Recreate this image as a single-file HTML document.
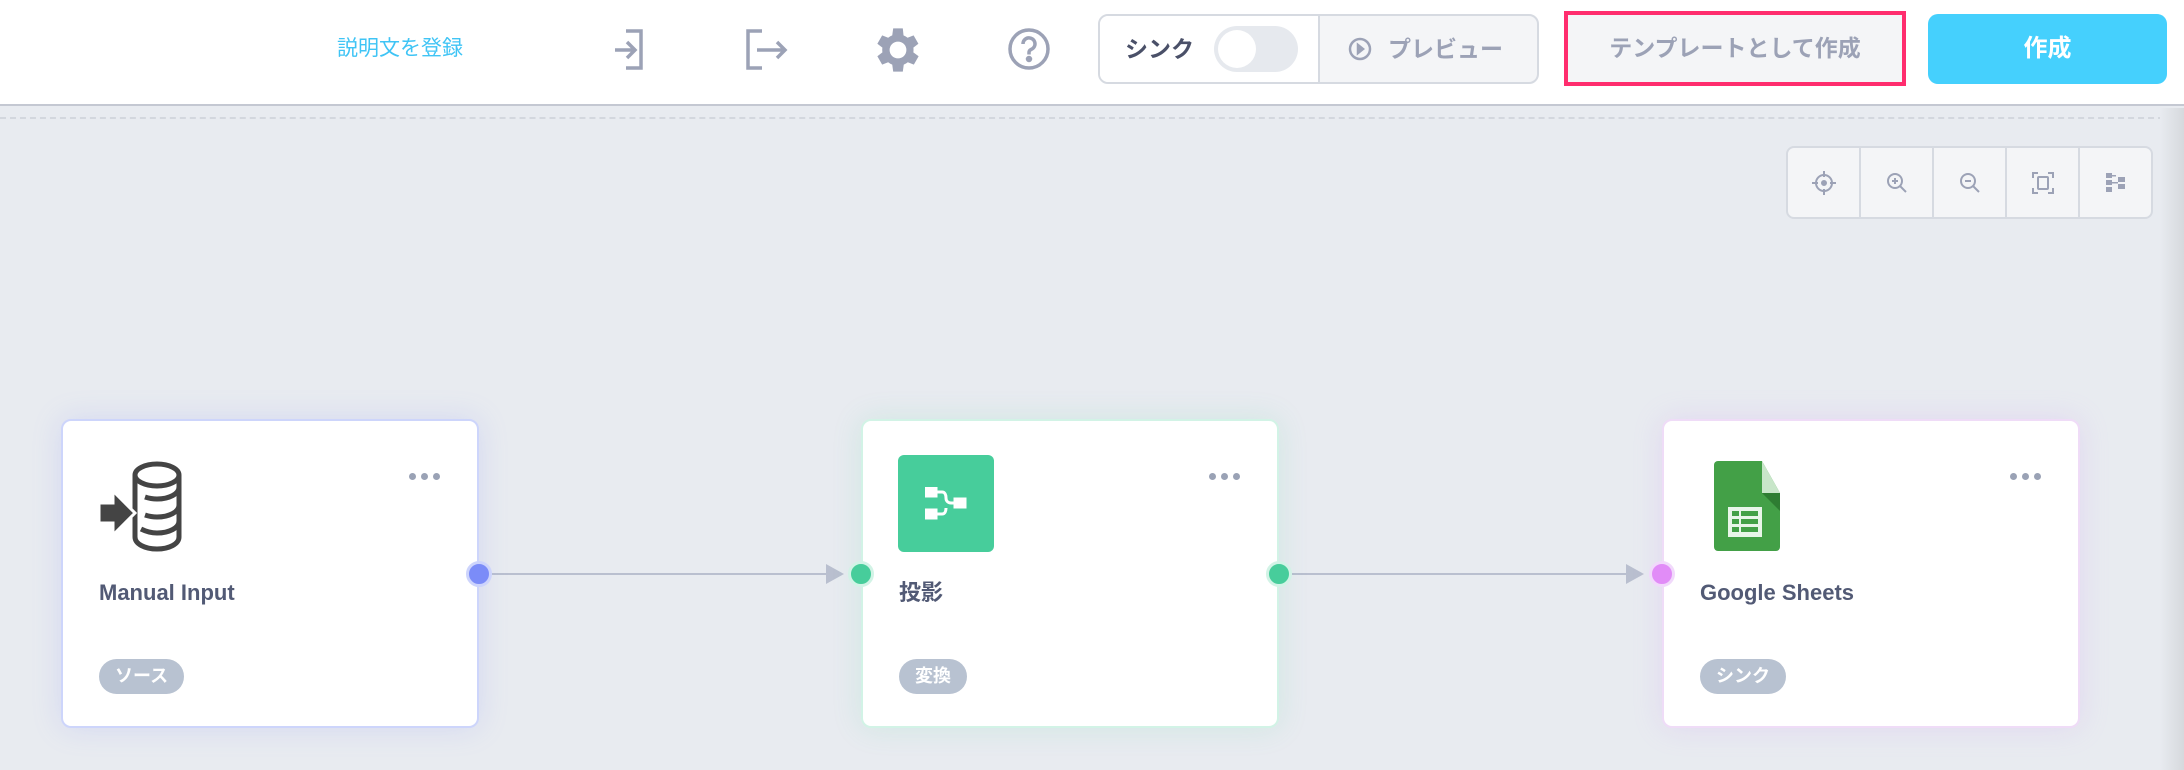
<!DOCTYPE html>
<html><head><meta charset="utf-8"><style>
*{box-sizing:border-box;margin:0;padding:0}
body{width:2184px;height:770px;overflow:hidden;background:#e8ebf0;font-family:"Liberation Sans","Noto Sans CJK JP",sans-serif;position:relative}
.hdr{position:absolute;left:0;top:0;width:2184px;height:106px;background:#fff;border-bottom:2px solid #c4c8d2}
.dash{position:absolute;left:0;top:117px;width:2184px;border-top:2px dashed #d3d7de}
.abs{position:absolute}
.node{position:absolute;top:419px;width:418px;height:309px;background:#fff;border-radius:10px}
.title{position:absolute;left:36px;top:158px;font-size:22px;line-height:28px;font-weight:bold;color:#525a75}
.badge{position:absolute;left:36px;top:238px;height:35px;padding:0 16px;border-radius:18px;background:#b8c2d1;color:#fff;font-size:18px;font-weight:bold;line-height:35px}
.dots{position:absolute;left:346px;top:46px;width:44px;height:10px;white-space:nowrap}
.dots i{display:inline-block;width:7px;height:7px;border-radius:50%;background:#9aa2b5;margin-right:5px}
.port{position:absolute;width:26px;height:26px;border-radius:50%;top:561px}
.line{position:absolute;top:573px;height:2px;background:#b9bfcf}
.arr{position:absolute;top:564px;width:0;height:0;border-top:10px solid transparent;border-bottom:10px solid transparent;border-left:18px solid #b9bfcf}
.tb{position:absolute;left:1786px;top:146px;width:367px;height:73px;background:#f4f5f7;border:2px solid #d6dae1;border-radius:8px;display:flex}
.tb div{flex:1;border-right:2px solid #d6dae1;display:flex;align-items:center;justify-content:center}
.tb div:last-child{border-right:none}
</style></head><body>
<div class="hdr"></div>
<div class="abs" style="left:337px;top:35px;font-size:21px;line-height:28px;color:#3fc4f5">説明文を登録</div>
<svg class="abs" style="left:613px;top:28px" width="44" height="44" viewBox="0 0 44 44" fill="none" stroke="#9ca2b6" stroke-width="3.5"><path d="M13 3h15v37H13"/><path d="M2 22h19M14 14l8 8-8 8"/></svg>
<svg class="abs" style="left:745px;top:28px" width="44" height="44" viewBox="0 0 44 44" fill="none" stroke="#9ca2b6" stroke-width="3.5"><path d="M17 3H3v37h14"/><path d="M12 22h28M32 14l8 8-8 8"/></svg>
<svg class="abs" style="left:874px;top:26px" width="48" height="48" viewBox="2 2 20 20"><path fill="#9ca2b6" fill-rule="evenodd" d="M19.4 13a7.5 7.5 0 000-2l2.1-1.6-2-3.5-2.5 1a7.6 7.6 0 00-1.7-1L15 3h-4l-.4 2.9a7.6 7.6 0 00-1.7 1l-2.5-1-2 3.5L6.5 11a7.5 7.5 0 000 2l-2.1 1.6 2 3.5 2.5-1a7.6 7.6 0 001.7 1L11 21h4l.4-2.9a7.6 7.6 0 001.7-1l2.5 1 2-3.5zM13 15.5a3.5 3.5 0 110-7 3.5 3.5 0 010 7z" transform="translate(-1 0)"/></svg>
<svg class="abs" style="left:1007px;top:27px" width="44" height="44" viewBox="0 0 44 44" fill="none" stroke="#9ca2b6" stroke-width="3.5"><circle cx="22" cy="22" r="19"/><path d="M16 17a6 6 0 1 1 8 5.5c-1.5.7-2 1.7-2 3v2"/><circle cx="22" cy="32" r="1.5" fill="#9ca2b6"/></svg>
<div class="abs" style="left:1098px;top:14px;width:441px;height:70px;border:2px solid #d6dae1;border-radius:10px;background:#f4f5f7;overflow:hidden">
 <div class="abs" style="left:0;top:0;width:220px;height:66px;background:#fff;border-right:2px solid #d6dae1"></div>
 <div class="abs" style="left:25px;top:18px;font-size:23px;line-height:30px;font-weight:bold;color:#4a5068">シンク</div>
 <div class="abs" style="left:114px;top:10px;width:84px;height:46px;border-radius:23px;background:#e6e9ee"></div>
 <div class="abs" style="left:118px;top:14px;width:38px;height:38px;border-radius:50%;background:#fff"></div>
 <svg class="abs" style="left:248px;top:21px" width="24" height="24" viewBox="0 0 24 24" fill="none" stroke="#9ca2b6" stroke-width="2.5"><circle cx="12" cy="12" r="10"/><path d="M10 8l5 4-5 4z" fill="#9ca2b6"/></svg>
 <div class="abs" style="left:288px;top:18px;font-size:23px;line-height:30px;font-weight:bold;color:#9ca2b6">プレビュー</div>
</div>
<div class="abs" style="left:1564px;top:11px;width:342px;height:75px;border:4px solid #ff2d6e;background:#f4f5f7;font-size:23px;font-weight:bold;color:#9ca2b6;text-align:center;line-height:67px">テンプレートとして作成</div>
<div class="abs" style="left:1928px;top:14px;width:239px;height:70px;border-radius:10px;background:#45d0fd;color:#fff;font-size:24px;font-weight:bold;text-align:center;line-height:70px">作成</div>
<div class="dash"></div>
<div class="abs" style="left:2160px;top:108px;width:24px;height:662px;background:linear-gradient(90deg,#e8ebf0,#d6d9dd)"></div>
<div class="tb">
 <div><svg width="26" height="26" viewBox="0 0 26 26" fill="none" stroke="#9ca2b6" stroke-width="2"><circle cx="13" cy="13" r="8"/><circle cx="13" cy="13" r="2" fill="#9ca2b6"/><path d="M13 1v6M13 19v6M1 13h6M19 13h6"/></svg></div>
 <div><svg width="26" height="26" viewBox="0 0 26 26" fill="none" stroke="#9ca2b6" stroke-width="2"><circle cx="11" cy="11" r="7"/><path d="M16 16l6 6M8 11h6M11 8v6"/></svg></div>
 <div><svg width="26" height="26" viewBox="0 0 26 26" fill="none" stroke="#9ca2b6" stroke-width="2"><circle cx="11" cy="11" r="7"/><path d="M16 16l6 6M8 11h6"/></svg></div>
 <div><svg width="26" height="26" viewBox="0 0 26 26" fill="none" stroke="#9ca2b6" stroke-width="2"><path d="M3 8V3h5M18 3h5v5M23 18v5h-5M8 23H3v-5"/><rect x="8" y="7" width="10" height="12" rx="1"/></svg></div>
 <div><svg width="26" height="26" viewBox="0 0 26 26" fill="#9ca2b6"><rect x="3" y="3" width="6" height="5"/><rect x="3" y="10" width="6" height="5"/><rect x="3" y="17" width="6" height="5"/><rect x="15" y="7" width="7" height="5"/><rect x="15" y="14" width="7" height="5"/><rect x="9" y="5" width="4" height="1.5"/><rect x="9" y="12" width="6" height="1.5"/></svg></div>
</div>
<div class="line" style="left:492px;width:340px"></div><div class="arr" style="left:826px"></div>
<div class="line" style="left:1292px;width:340px"></div><div class="arr" style="left:1626px"></div>
<div class="node" style="left:61px;border:2px solid #cdd5fb;box-shadow:0 0 30px rgba(130,140,250,.2)">
 <svg class="abs" style="left:34px;top:40px" width="100" height="95" viewBox="0 0 100 95" fill="none" stroke="#444" stroke-width="5"><ellipse cx="60" cy="14" rx="22" ry="11"/><path d="M38 14v62c0 7 10 12 22 12s22-5 22-12V14"/><path d="M48 36c3 1 7 2 12 2 12 0 22-5 22-12M48 54c3 1 7 2 12 2 12 0 22-5 22-12M44 68c4 2 10 4 16 4 12 0 22-5 22-12"/><path d="M2 42h14V30l22 22-22 22V62H2z" fill="#444" stroke="#fff" stroke-width="3"/></svg>
 <div class="dots"><i></i><i></i><i></i></div>
 <div class="title">Manual Input</div>
 <div class="badge">ソース</div>
</div>
<div class="node" style="left:861px;border:2px solid #d2f3e6;box-shadow:0 0 30px rgba(70,205,155,.15)">
 <div class="abs" style="left:35px;top:34px;width:96px;height:97px;border-radius:6px;background:#47cd9b"></div>
 <svg class="abs" style="left:62px;top:66px" width="44" height="34" viewBox="0 0 44 34" fill="none" stroke="#fff" stroke-width="3"><rect x="1" y="1" width="10" height="8" fill="#fff"/><rect x="1" y="23" width="10" height="8" fill="#fff"/><rect x="30" y="12" width="10" height="8" fill="#fff"/><path d="M11 5h6c3 0 4 3 4 6s2 5 5 5h4M11 27h6c3 0 4-3 4-6"/></svg>
 <div class="dots"><i></i><i></i><i></i></div>
 <div class="title">投影</div>
 <div class="badge">変換</div>
</div>
<div class="node" style="left:1662px;border:2px solid #efdcf7;box-shadow:0 0 30px rgba(200,140,240,.2)">
 <svg class="abs" style="left:50px;top:40px" width="66" height="90" viewBox="0 0 66 90"><path d="M4 0h44l18 32v54a4 4 0 01-4 4H4a4 4 0 01-4-4V4a4 4 0 014-4z" fill="#43a047"/><path d="M48 0l18 32H48z" fill="#c8e6c9"/><path d="M48 32h18v18z" fill="#2e7d32"/><rect x="14" y="46" width="34" height="30" fill="#e8f5e9"/><g fill="#43a047"><rect x="18" y="50" width="7" height="5"/><rect x="27" y="50" width="17" height="5"/><rect x="18" y="58" width="7" height="5"/><rect x="27" y="58" width="17" height="5"/><rect x="18" y="66" width="7" height="5"/><rect x="27" y="66" width="17" height="5"/></g></svg>
 <div class="dots"><i></i><i></i><i></i></div>
 <div class="title">Google Sheets</div>
 <div class="badge">シンク</div>
</div>
<div class="port" style="left:466px;background:#7b8cf8;border:3px solid #cdd4fc"></div>
<div class="port" style="left:848px;background:#47cd9b;border:3px solid #d2f3e6"></div>
<div class="port" style="left:1266px;background:#47cd9b;border:3px solid #d2f3e6"></div>
<div class="port" style="left:1649px;background:#e18cf7;border:3px solid #f1d9fb"></div>
</body></html>
